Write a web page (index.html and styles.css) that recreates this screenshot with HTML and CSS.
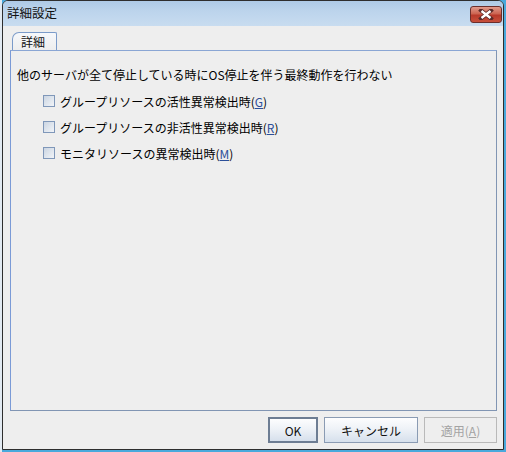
FILE: index.html
```html
<!DOCTYPE html>
<html lang="ja">
  <head>
    <meta charset="UTF-8" />
    <title>詳細設定</title>
    <link rel="stylesheet" href="styles.css">
  </head>
  <body>
    <div class="screen">
      <div class="window">
        <div class="titlebar">
          <span class="title">詳細設定</span>
          <div class="close">
            <svg width="16" height="11" viewBox="0 0 16 11">
              <path d="M3 1.5 L13 9.5 M13 1.5 L3 9.5" stroke="#5a2a28" stroke-width="4" stroke-linecap="square" />
              <path d="M3.5 2 L12.5 9 M12.5 2 L3.5 9" stroke="#ffffff" stroke-width="2.4" />
            </svg>
          </div>
        </div>
        <div class="content">
          <div class="tabs">
            <div class="tab">詳細</div>
          </div>
          <div class="panel">
            <p class="lead">他のサーバが全て停止している時にOS停止を伴う最終動作を行わない</p>
            <label class="check"><span class="box"></span>グループリソースの活性異常検出時(<u>G</u>)</label>
            <label class="check"><span class="box"></span>グループリソースの非活性異常検出時(<u>R</u>)</label>
            <label class="check"><span class="box"></span>モニタリソースの異常検出時(<u>M</u>)</label>
          </div>
          <div class="actions">
            <div class="button default">OK</div>
            <div class="button cancel">キャンセル</div>
            <div class="button disabled">適用(<u>A</u>)</div>
          </div>
        </div>
      </div>
    </div>
  </body>
</html>
```

FILE: styles.css
```css
body {
  margin: 0;
  width: 506px;
  height: 452px;
  overflow: hidden;
  background-color: #49a9dc;
  font-family: "Noto Sans CJK JP", "DejaVu Sans", sans-serif;
  font-size: 12px;
  color: #222;
}
.screen {
  display: flex;
  height: 452px;
  box-sizing: border-box;
  border-left: 2px solid #e2eaf2;
}
.window {
  width: 502px;
  height: 450px;
  box-sizing: border-box;
  border: 1px solid #2e2e2e;
  border-radius: 6px 6px 0 0;
  background-color: #eeeeee;
  display: flex;
  flex-direction: column;
  overflow: hidden;
}
.titlebar {
  height: 25px;
  flex-shrink: 0;
  display: flex;
  justify-content: space-between;
  align-items: flex-start;
  padding: 0 1px 0 4px;
  background: linear-gradient(#aecae7, #bcd4ec 40%, #c8dcf0);
}
.title {
  line-height: 24px;
  font-size: 12.5px;
  color: #111;
}
.close {
  width: 30px;
  height: 15px;
  margin-top: 5px;
  border: 1px solid #6b2e2b;
  border-radius: 3px;
  background: linear-gradient(#e09a8c, #cc6451 45%, #b8392a 55%, #c7503c);
  display: flex;
  justify-content: center;
  align-items: center;
}
.content {
  flex: 1;
  display: flex;
  flex-direction: column;
  padding: 6px 6px 6px 7px;
}
.tabs {
  display: flex;
  padding-left: 2px;
  height: 18px;
  position: relative;
  z-index: 1;
}
.tab {
  width: 45px;
  height: 18px;
  box-sizing: border-box;
  padding-left: 8px;
  line-height: 17px;
  border: 1px solid #7b9bc9;
  border-bottom: none;
  border-radius: 7px 2px 0 0;
  background: linear-gradient(#f6f8fb, #eeeeee);
  color: #111;
}
.panel {
  flex: 1;
  border: 1px solid #8195b3;
  border-left-color: #7a9ad6;
  border-top-color: #8aa6d4;
  padding: 0 6px;
}
.lead {
  margin: 16px 0 5px;
  line-height: 16px;
  color: #000;
}
.check {
  display: flex;
  align-items: center;
  height: 26px;
  padding-left: 26px;
  color: #000;
}
.check u {
  color: #2b4f99;
}
.box {
  width: 10px;
  height: 10px;
  margin-right: 5px;
  border: 1px solid #7f97b9;
  background: linear-gradient(135deg, #cbd5e2, #f1f4f8);
}
.actions {
  display: flex;
  justify-content: flex-end;
  gap: 6px;
  margin-top: 6px;
}
.button {
  height: 26px;
  box-sizing: border-box;
  display: flex;
  align-items: center;
  justify-content: center;
  border: 1px solid #8a9bb3;
  background: linear-gradient(#fdfdfe, #eef2f7 45%, #d6e0ec);
  color: #111;
}
.button.default {
  width: 50px;
  border: 2px solid #6d7d93;
}
.button.cancel {
  width: 94px;
}
.button.disabled {
  width: 73px;
  border-color: #b9b9b9;
  background: #eeeeee;
  color: #a3a3a3;
}
```
